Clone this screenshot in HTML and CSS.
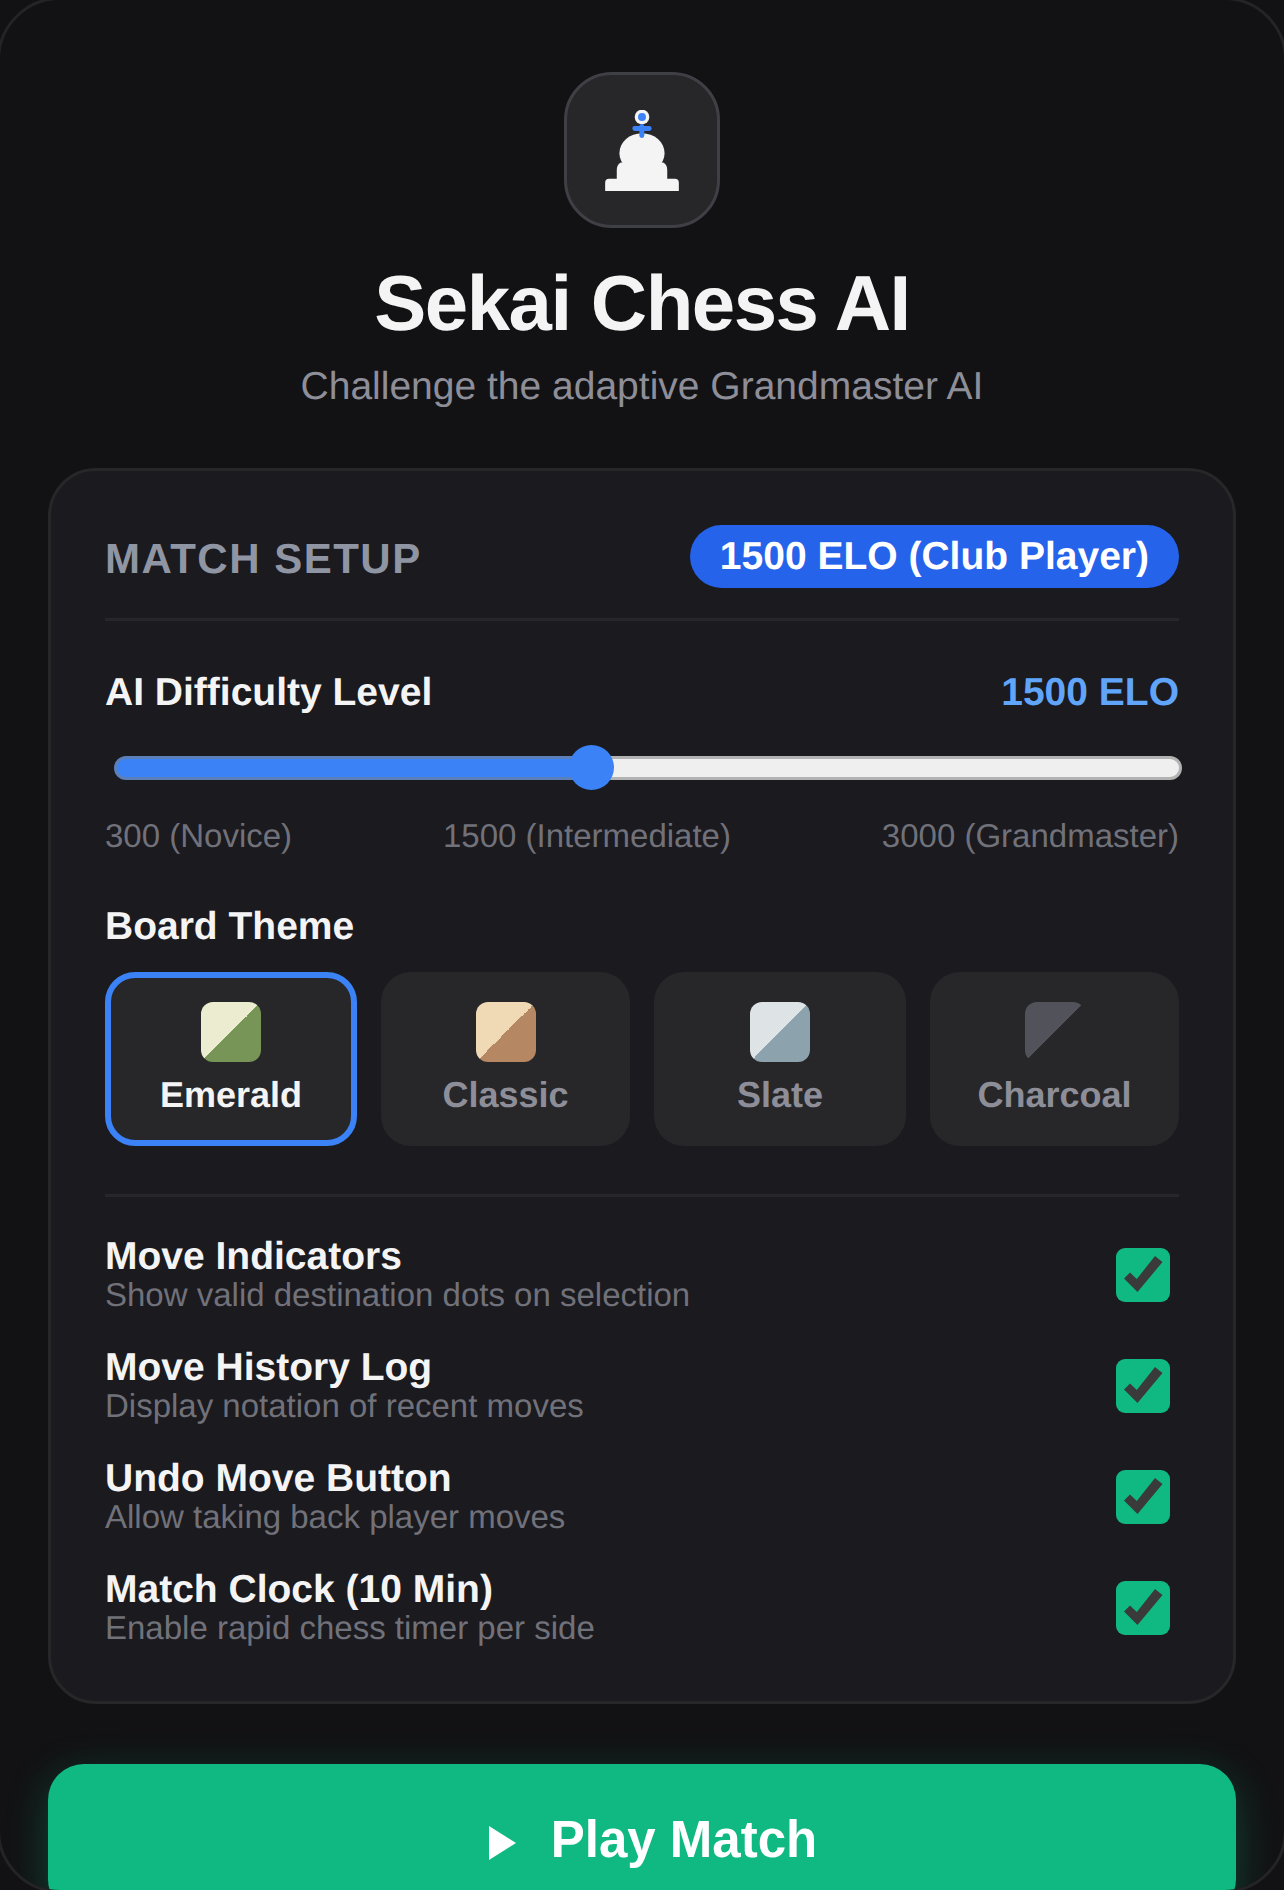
FILE: index.html
```html
<!DOCTYPE html>
<html lang="en">
<head>
    <meta charset="UTF-8">
    <meta name="viewport" content="width=device-width, initial-scale=1.0">
    <title>Sekai Chess AI</title>
    <link rel="stylesheet" href="styles.css">
</head>
<body>
    <div class="screen">
        <div class="logo-box">
            <svg class="logo" viewBox="0 0 222 244">
                <path fill="#f4f4f5" d="M0 244V219Q0 207 12 207H210Q222 207 222 219V244Z"/>
                <path fill="#f4f4f5" d="M35 210V180Q35 165 47 158H175Q187 165 187 180V210Z"/>
                <ellipse fill="#f4f4f5" cx="111" cy="130" rx="68" ry="60"/>
                <circle fill="#f4f4f5" cx="111" cy="21" r="22"/>
                <circle fill="#3b82f6" cx="111" cy="21" r="12"/>
                <rect fill="#3b82f6" x="82" y="48" width="58" height="15" rx="7.5"/>
                <rect fill="#3b82f6" x="103" y="42" width="15" height="42" rx="7"/>
            </svg>
        </div>
        <h1>Sekai Chess AI</h1>
        <p class="subtitle">Challenge the adaptive Grandmaster AI</p>

        <div class="card">
            <div class="card-header">
                <span class="card-title">MATCH SETUP</span>
                <span class="badge">1500 ELO (Club Player)</span>
            </div>

            <div class="label-row">
                <span class="label">AI Difficulty Level</span>
                <span class="elo-value">1500 ELO</span>
            </div>
            <input class="slider" type="range" min="300" max="3000" value="1500">
            <div class="slider-labels">
                <span>300 (Novice)</span>
                <span>1500 (Intermediate)</span>
                <span>3000 (Grandmaster)</span>
            </div>

            <div class="label theme-label">Board Theme</div>
            <div class="themes">
                <div class="theme active">
                    <span class="swatch swatch-emerald"></span>
                    <span>Emerald</span>
                </div>
                <div class="theme">
                    <span class="swatch swatch-classic"></span>
                    <span>Classic</span>
                </div>
                <div class="theme">
                    <span class="swatch swatch-slate"></span>
                    <span>Slate</span>
                </div>
                <div class="theme">
                    <span class="swatch swatch-charcoal"></span>
                    <span>Charcoal</span>
                </div>
            </div>

            <div class="options">
                <div class="option">
                    <div>
                        <div class="label">Move Indicators</div>
                        <div class="option-desc">Show valid destination dots on selection</div>
                    </div>
                    <span class="check"><svg viewBox="0 0 54 54"><path d="M39 8L46.5 14L21.5 44L8 30.5L14 24.5L20.8 31Z"/></svg></span>
                </div>
                <div class="option">
                    <div>
                        <div class="label">Move History Log</div>
                        <div class="option-desc">Display notation of recent moves</div>
                    </div>
                    <span class="check"><svg viewBox="0 0 54 54"><path d="M39 8L46.5 14L21.5 44L8 30.5L14 24.5L20.8 31Z"/></svg></span>
                </div>
                <div class="option">
                    <div>
                        <div class="label">Undo Move Button</div>
                        <div class="option-desc">Allow taking back player moves</div>
                    </div>
                    <span class="check"><svg viewBox="0 0 54 54"><path d="M39 8L46.5 14L21.5 44L8 30.5L14 24.5L20.8 31Z"/></svg></span>
                </div>
                <div class="option">
                    <div>
                        <div class="label">Match Clock (10 Min)</div>
                        <div class="option-desc">Enable rapid chess timer per side</div>
                    </div>
                    <span class="check"><svg viewBox="0 0 54 54"><path d="M39 8L46.5 14L21.5 44L8 30.5L14 24.5L20.8 31Z"/></svg></span>
                </div>
            </div>
        </div>

        <button class="play-button" type="button">
            <svg class="play-icon" viewBox="0 0 27 34"><path d="M0 0L27 17L0 34Z"/></svg>
            Play Match
        </button>
    </div>
</body>
</html>
```

FILE: styles.css
```css
* {
    box-sizing: border-box;
}
html, body {
    margin: 0;
    height: 1890px;
    overflow: hidden;
    background-color: #121214;
}
body {
    font-family: "Liberation Sans", Arial, sans-serif;
    color: #f4f4f5;
    text-rendering: geometricPrecision;
}
/* the frame's border sits just outside the window, only its corners show */
.screen {
    width: 1290px;
    height: 1896px;
    margin: -3px;
    padding: 72px 48px 0;
    background-color: #121214;
    border: 3px solid #242427;
    border-radius: 63px;
    overflow: hidden;
    display: flex;
    flex-direction: column;
    align-items: center;
}
.logo-box {
    flex: none;
    width: 156px;
    height: 156px;
    background-color: #27272a;
    border: 3px solid #3f3f46;
    border-radius: 48px;
    display: flex;
    align-items: center;
    justify-content: center;
}
.logo {
    width: 74px;
    height: 81px;
}
h1 {
    margin: 30px 0 0;
    font-size: 78px;
    line-height: 90px;
    letter-spacing: -1.5px;
    font-weight: bold;
}
.subtitle {
    margin: 15px 0 0;
    font-size: 39px;
    line-height: 48px;
    color: #8e8e99;
}
.card {
    flex: none;
    width: 100%;
    margin-top: 57px;
    height: 1236px;
    padding: 54px 54px 0;
    background-color: #1a1a1f;
    border: 3px solid #27272a;
    border-radius: 48px;
}
.card-header {
    display: flex;
    align-items: center;
    justify-content: space-between;
    height: 96px;
    padding-bottom: 30px;
    border-bottom: 3px solid #27272a;
}
.card-title {
    margin-top: 5px;
    font-size: 42px;
    font-weight: bold;
    letter-spacing: 1.5px;
    color: #8f95a3;
}
.badge {
    padding: 0 30px;
    height: 63px;
    line-height: 63px;
    font-size: 39px;
    font-weight: bold;
    color: #fff;
    background-color: #2563eb;
    border-radius: 32px;
}
.label-row {
    display: flex;
    justify-content: space-between;
    align-items: center;
    margin-top: 48px;
}
.label {
    font-size: 39px;
    line-height: 48px;
    font-weight: bold;
    color: #f4f4f5;
}
.elo-value {
    font-size: 39px;
    line-height: 48px;
    font-weight: bold;
    color: #60a5fa;
}
.slider {
    -webkit-appearance: none;
    appearance: none;
    display: block;
    width: 1068px;
    height: 45px;
    margin: 28px -3px 0 9px;
    background: none;
}
.slider::-webkit-slider-runnable-track {
    height: 24px;
    border: 3px solid transparent;
    border-radius: 12px;
    background:
        linear-gradient(to right, #3b82f6 44.6%, #efefef 44.6%) padding-box,
        linear-gradient(to right, #5b80b9 44.6%, #b2b2b2 44.6%) border-box;
}
.slider::-webkit-slider-thumb {
    -webkit-appearance: none;
    width: 45px;
    height: 45px;
    margin-top: -13.5px;
    border-radius: 50%;
    background-color: #3b82f6;
}
.slider-labels {
    display: flex;
    justify-content: space-between;
    margin-top: 25px;
    font-size: 33px;
    line-height: 42px;
    color: #71717a;
}
.theme-label {
    margin-top: 46px;
}
.themes {
    display: grid;
    grid-template-columns: 252px 249px 252px 249px;
    gap: 24px;
    margin-top: 21px;
}
.theme {
    height: 174px;
    padding-top: 30px;
    display: flex;
    flex-direction: column;
    align-items: center;
    gap: 12px;
    font-size: 36px;
    line-height: 42px;
    font-weight: bold;
    color: #8e8e99;
    background-color: #27272a;
    border-radius: 30px;
}
.theme.active {
    padding-top: 24px;
    color: #f4f4f5;
    border: 6px solid #3b82f6;
}
.swatch {
    width: 60px;
    height: 60px;
    border-radius: 12px;
}
.swatch-emerald {
    background: linear-gradient(135deg, #ebecd0 50%, #779556 50%);
}
.swatch-classic {
    background: linear-gradient(135deg, #f0d9b5 50%, #b58863 50%);
}
.swatch-slate {
    background: linear-gradient(135deg, #dee3e6 50%, #8ca2ad 50%);
}
.swatch-charcoal {
    background: linear-gradient(135deg, #52525b 50%, #27272a 50%);
}
.options {
    margin-top: 48px;
    padding-top: 22px;
    border-top: 3px solid #27272a;
}
.option {
    display: flex;
    align-items: center;
    justify-content: space-between;
    height: 111px;
    padding-right: 9px;
}
.option .label {
    line-height: 40px;
}
.option-desc {
    font-size: 33px;
    line-height: 36px;
    color: #71717a;
}
.check {
    width: 54px;
    height: 54px;
    background-color: #10b981;
    border-radius: 9px;
}
.check svg {
    display: block;
    width: 54px;
    height: 54px;
    fill: #3a3a3a;
}
.play-button {
    flex: none;
    width: 100%;
    height: 151px;
    margin-top: 60px;
    padding-left: 28px;
    display: flex;
    align-items: center;
    justify-content: center;
    gap: 35px;
    font-family: inherit;
    font-size: 51px;
    font-weight: bold;
    color: #fff;
    background-color: #10b981;
    border: none;
    border-radius: 36px;
    box-shadow: 0 12px 42px rgba(16, 185, 129, 0.3);
}
.play-icon {
    width: 27px;
    height: 34px;
    margin-top: 7px;
    fill: #fff;
}
```
